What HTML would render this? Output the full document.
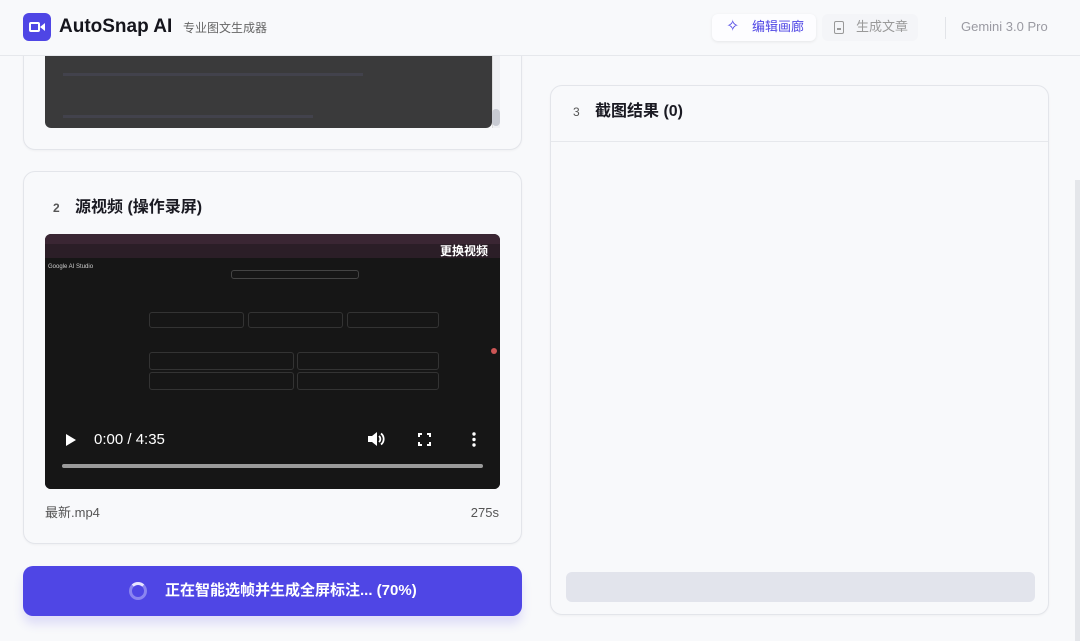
<!DOCTYPE html>
<html><head><meta charset="utf-8"><style>
*{box-sizing:border-box;margin:0;padding:0}
body{width:1080px;height:641px;overflow:hidden;background:#f8f9fb;font-family:"Liberation Sans","Noto Sans CJK SC",sans-serif;position:relative;color:#111}
.abs{position:absolute}
.tx{position:absolute;height:20px;line-height:20px;white-space:nowrap}
.card{position:absolute;background:#f8f9fb;border:1px solid #e3e5ea;border-radius:12px;box-shadow:0 1px 2px rgba(0,0,0,.04)}
.t{font-size:16px;font-weight:bold;color:#1a1a22}
.n{font-size:12px;color:#555;font-weight:bold}
</style></head><body>
<!-- header -->
<div class="abs" style="left:0;top:0;width:1080px;height:56px;background:#f8f9fb;border-bottom:1px solid #e6e8ec;z-index:5">
  <div class="abs" style="left:23px;top:13px;width:28px;height:28px;background:#4f46e5;border-radius:6px">
    <div class="abs" style="left:6px;top:9px;width:11px;height:10px;border:2px solid #fff;border-radius:2px"></div>
    <div class="abs" style="left:17px;top:10px;width:0;height:0;border-top:4px solid transparent;border-bottom:4px solid transparent;border-right:5px solid #fff"></div>
  </div>
  <div class="tx" style="left:59px;top:17px;font-size:19px;font-weight:bold;color:#15151c">AutoSnap AI</div>
  <div class="tx" style="left:183px;top:18px;font-size:12px;color:#666">专业图文生成器</div>
  <div class="abs" style="left:712px;top:14px;width:104px;height:27px;background:#fdfdff;border-radius:6px;box-shadow:0 1px 3px rgba(0,0,0,.08)">
    <div class="tx" style="left:14px;top:3px;font-size:16px;color:#4f46e5">✧</div>
    <div class="tx" style="left:40px;top:3px;font-size:13px;color:#4f46e5">编辑画廊</div>
  </div>
  <div class="abs" style="left:822px;top:14px;width:96px;height:27px;background:#f4f5f8;border-radius:6px">
    <div class="abs" style="left:12px;top:7px;width:10px;height:13px;border:1.5px solid #999;border-radius:2px"><div style="margin:6px 2px 0;height:1.5px;background:#999"></div></div>
    <div class="tx" style="left:34px;top:3px;font-size:13px;color:#999">生成文章</div>
  </div>
  <div class="abs" style="left:945px;top:17px;width:1px;height:22px;background:#e2e4e8"></div>
  <div class="tx" style="left:961px;top:17px;font-size:13px;color:#9a9aa2">Gemini 3.0 Pro</div>
</div>
<!-- card1 -->
<div class="card" style="left:23px;top:20px;width:499px;height:130px">
  <div class="abs" style="left:21px;top:0;width:447px;height:107px;background:#3a3a3b;border-radius:0 0 6px 6px">
    <div class="abs" style="left:18px;top:52px;width:300px;height:3px;background:#42424c"></div>
    <div class="abs" style="left:18px;top:94px;width:250px;height:3px;background:#42424c"></div>
  </div>
  <div class="abs" style="left:468px;top:0;width:8px;height:107px;background:#f0f1f4;border-left:1px solid #ddd"></div>
  <div class="abs" style="left:468px;top:88px;width:8px;height:17px;background:#c8cbd3;border-radius:4px"></div>
</div>
<!-- card2 -->
<div class="card" style="left:23px;top:171px;width:499px;height:373px">
  <div class="tx n" style="left:29px;top:26px">2</div>
  <div class="tx t" style="left:51px;top:26px">源视频 (操作录屏)</div>
  <div class="abs" style="left:21px;top:62px;width:455px;height:255px;background:#111;border-radius:6px;overflow:hidden">
    <div class="abs" style="left:0;top:0;width:455px;height:10px;background:#3a2633"></div>
    <div class="abs" style="left:0;top:10px;width:455px;height:14px;background:#2b1e27"></div>
    <div class="abs" style="left:0;top:24px;width:455px;height:231px;background:#161616"></div>
    <div class="tx" style="left:395px;top:7px;font-size:12px;font-weight:bold;color:#fff">更换视频</div>
    <div class="abs" style="left:3px;top:30px;font-size:6px;color:#ccc">Google AI Studio</div>
    <div class="abs" style="left:186px;top:36px;width:128px;height:9px;border:1px solid #444;border-radius:3px"></div>
    <div class="abs" style="left:104px;top:78px;width:95px;height:16px;border:1px solid #333;border-radius:3px"></div>
    <div class="abs" style="left:203px;top:78px;width:95px;height:16px;border:1px solid #333;border-radius:3px"></div>
    <div class="abs" style="left:302px;top:78px;width:92px;height:16px;border:1px solid #333;border-radius:3px"></div>
    <div class="abs" style="left:104px;top:118px;width:145px;height:18px;border:1px solid #333;border-radius:3px"></div>
    <div class="abs" style="left:252px;top:118px;width:142px;height:18px;border:1px solid #333;border-radius:3px"></div>
    <div class="abs" style="left:104px;top:138px;width:145px;height:18px;border:1px solid #333;border-radius:3px"></div>
    <div class="abs" style="left:252px;top:138px;width:142px;height:18px;border:1px solid #333;border-radius:3px"></div>
    <div class="abs" style="left:446px;top:114px;width:6px;height:6px;background:#c55;border-radius:50%"></div>
    <div class="abs" style="left:21px;top:200px;width:0;height:0;border-top:6px solid transparent;border-bottom:6px solid transparent;border-left:10px solid #fff"></div>
    <div class="tx" style="left:49px;top:196px;font-size:15px;color:#fff">0:00 / 4:35</div>
    <svg class="abs" style="left:322px;top:197px" width="18" height="16" viewBox="0 0 18 16"><path d="M1 5h4l5-4v14l-5-4H1z" fill="#fff"/><path d="M12 5a4 4 0 0 1 0 6M14 2.5a7 7 0 0 1 0 11" stroke="#fff" stroke-width="1.8" fill="none"/></svg>
    <svg class="abs" style="left:373px;top:199px" width="13" height="13" viewBox="0 0 13 13"><path d="M1 4V1h3M9 1h3v3M12 9v3H9M4 12H1V9" stroke="#fff" stroke-width="2" fill="none"/></svg>
    <svg class="abs" style="left:427px;top:198px" width="4" height="15" viewBox="0 0 4 15"><circle cx="2" cy="2" r="1.7" fill="#fff"/><circle cx="2" cy="7.5" r="1.7" fill="#fff"/><circle cx="2" cy="13" r="1.7" fill="#fff"/></svg>
    <div class="abs" style="left:17px;top:230px;width:421px;height:4px;background:#9a9a9a;border-radius:2px"></div>
  </div>
  <div class="tx" style="left:21px;top:331px;font-size:13px;color:#555">最新.mp4</div>
  <div class="tx" style="right:22px;top:331px;font-size:13px;color:#555">275s</div>
</div>
<!-- button -->
<div class="abs" style="left:23px;top:566px;width:499px;height:50px;background:#4f46e5;border-radius:10px;box-shadow:0 8px 10px rgba(79,70,229,.15)">
  <div class="abs" style="left:106px;top:16px;width:18px;height:18px;border:3px solid #8b85f0;border-top-color:#e8e6ff;border-radius:50%"></div>
  <div class="tx" style="left:142px;top:15px;font-size:15px;font-weight:bold;color:#fff">正在智能选帧并生成全屏标注... (70%)</div>
</div>
<!-- card3 -->
<div class="card" style="left:550px;top:85px;width:499px;height:530px">
  <div class="tx n" style="left:22px;top:16px;font-weight:normal">3</div>
  <div class="tx t" style="left:44px;top:16px">截图结果 (0)</div>
  <div class="abs" style="left:0;top:55px;width:497px;height:1px;background:#e6e8ec"></div>
  <div class="abs" style="left:15px;top:486px;width:469px;height:30px;background:#e2e4ec;border-radius:6px"></div>
</div>
<div class="abs" style="left:1075px;top:180px;width:5px;height:461px;background:#e4e6ea"></div>
</body></html>
